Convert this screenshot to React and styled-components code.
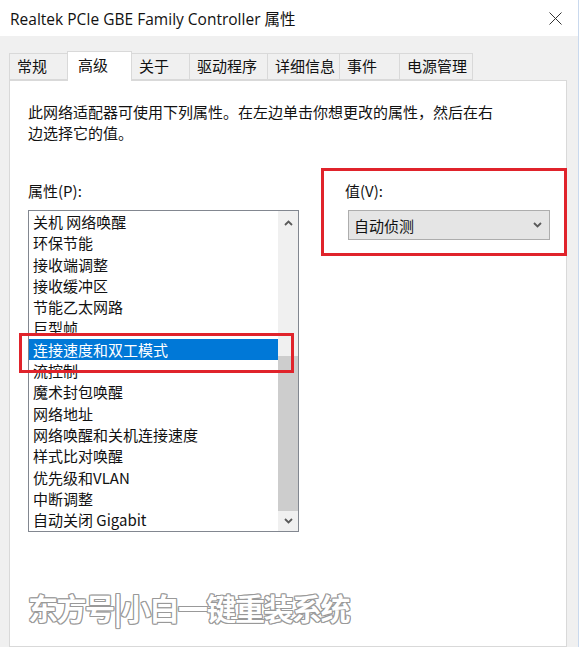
import React from "react";
import styled, { createGlobalStyle } from "styled-components";

const Global = createGlobalStyle`
  html, body { margin: 0; padding: 0; background: #f0f0f0; }
  body { font-family: "Noto Sans CJK SC", "Noto Sans", sans-serif; color: #000; }
  * { box-sizing: border-box; }
`;

const Window = styled.div`
  width: 579px;
  height: 647px;
  overflow: hidden;
  display: flex;
  flex-direction: column;
  background: #f0f0f0;
  border-right: 1px solid #c9d9ee;
`;

const TitleBar = styled.div`
  height: 36px;
  flex: none;
  background: #fff;
  display: flex;
  align-items: center;
  justify-content: space-between;
  padding: 0 16px 0 10px;
`;

const Title = styled.div`
  font-family: "Open Sans", "Noto Sans CJK SC", sans-serif;
  font-size: 15.5px;
  color: #111;
  white-space: nowrap;
`;

const TabsRow = styled.div`
  height: 44px;
  flex: none;
  display: flex;
  align-items: flex-end;
  padding-left: 10px;
  position: relative;
  z-index: 1;
`;

const Tab = styled.div`
  width: ${(p) => p.$w}px;
  height: ${(p) => (p.$active ? 30 : 27)}px;
  margin-bottom: ${(p) => (p.$active ? -1 : 0)}px;
  padding-left: ${(p) => (p.$active ? 10 : 7)}px;
  border: 1px solid #d9d9d9;
  border-bottom: ${(p) => (p.$active ? "none" : "1px solid #d9d9d9")};
  margin-left: -1px;
  background: ${(p) => (p.$active ? "#fff" : "#f0f0f0")};
  font-size: 15px;
  line-height: ${(p) => (p.$active ? 26 : 23)}px;
  color: #111;
  white-space: nowrap;
`;

const Panel = styled.div`
  flex: 1;
  margin-left: 9px;
  width: 558px;
  background: #fff;
  border: 1px solid #d9d9d9;
  padding: 20px 0 0 18px;
  display: flex;
  flex-direction: column;
`;

const Description = styled.p`
  margin: 0;
  width: 472px;
  font-size: 15px;
  line-height: 21px;
  color: #111;
`;

const Columns = styled.div`
  margin-top: 25px;
  display: grid;
  grid-template-columns: 271px 246px;
  column-gap: 22px;
  align-items: start;
`;

const LeftColumn = styled.div`
  padding-top: 12px;
  position: relative;
`;

const FieldLabel = styled.div`
  font-size: 15px;
  line-height: 21px;
  color: #111;
  margin-bottom: 9px;
`;

const ListBox = styled.div`
  position: relative;
  height: 322px;
  border: 1px solid #828790;
  display: flex;
`;

const Items = styled.div`
  flex: 1;
  padding-top: 0;
`;

const Item = styled.div`
  height: 21.3px;
  line-height: 21.3px;
  padding-left: 4px;
  font-size: 15px;
  white-space: nowrap;
  color: ${(p) => (p.$selected ? "#fff" : "#111")};
  background: ${(p) => (p.$selected ? "#0078d7" : "transparent")};
`;

const Scrollbar = styled.div`
  width: 20px;
  background: #f0f0f0;
  display: flex;
  flex-direction: column;
`;

const ScrollButton = styled.div`
  height: ${(p) => p.$h}px;
  display: flex;
  align-items: center;
  justify-content: center;
  flex: none;
`;

const Track = styled.div`
  flex: 1;
  display: flex;
  flex-direction: column;
  justify-content: flex-end;
`;

const Thumb = styled.div`
  height: 155px;
  background: #cdcdcd;
`;

const Annotation = styled.div`
  position: absolute;
  left: ${(p) => p.$x}px;
  top: ${(p) => p.$y}px;
  width: ${(p) => p.$w}px;
  height: ${(p) => p.$h}px;
  border: 3px solid #e0232b;
  pointer-events: none;
`;

const ValueBox = styled.div`
  border: 3px solid #e0232b;
  padding: 9px 0 13px 21px;
`;

const Select = styled.div`
  margin-left: 3px;
  width: 202px;
  height: 30px;
  background: #e5e5e5;
  border: 1px solid #adadad;
  display: flex;
  align-items: center;
  justify-content: space-between;
  padding: 0 7px 0 5px;
  font-size: 15px;
  color: #111;
`;

const Watermark = styled.div`
  margin-top: 57px;
  font-size: 30px;
  line-height: 36px;
  font-weight: 700;
  letter-spacing: -1.5px;
  color: #fff;
  white-space: nowrap;
  text-shadow:
    1px 0 0 #999, -1px 0 0 #999, 0 1px 0 #999, 0 -1px 0 #999,
    1px 1px 0 #999, -1px -1px 0 #999, 1px -1px 0 #999, -1px 1px 0 #999;
`;

const Chevron = ({ up }) => (
  <svg width="9" height="6" viewBox="0 0 9 6">
    <path
      d={up ? "M1 5 L4.5 1.5 L8 5" : "M1 1 L4.5 4.5 L8 1"}
      fill="none"
      stroke="#5a5a5a"
      strokeWidth="1.8"
    />
  </svg>
);

const tabs = [
  { label: "常规", w: 59 },
  { label: "高级", w: 65, active: true },
  { label: "关于", w: 59 },
  { label: "驱动程序", w: 79 },
  { label: "详细信息", w: 73 },
  { label: "事件", w: 61 },
  { label: "电源管理", w: 74 },
];

const items = [
  "关机 网络唤醒",
  "环保节能",
  "接收端调整",
  "接收缓冲区",
  "节能乙太网路",
  "巨型帧",
  "连接速度和双工模式",
  "流控制",
  "魔术封包唤醒",
  "网络地址",
  "网络唤醒和关机连接速度",
  "样式比对唤醒",
  "优先级和VLAN",
  "中断调整",
  "自动关闭 Gigabit",
];

export default function App() {
  return (
    <>
      <Global />
      <Window>
        <TitleBar>
          <Title>Realtek PCIe GBE Family Controller 属性</Title>
          <svg width="13" height="13" viewBox="0 0 13 13">
            <path d="M0.5 0.5 L12.5 12.5 M12.5 0.5 L0.5 12.5" stroke="#333" strokeWidth="1" />
          </svg>
        </TitleBar>
        <TabsRow>
          {tabs.map((t) => (
            <Tab key={t.label} $w={t.w} $active={t.active}>
              {t.label}
            </Tab>
          ))}
        </TabsRow>
        <Panel>
          <Description>
            此网络适配器可使用下列属性。在左边单击你想更改的属性，然后在右边选择它的值。
          </Description>
          <Columns>
            <LeftColumn>
              <FieldLabel>属性(P):</FieldLabel>
              <ListBox>
                <Items>
                  {items.map((it, i) => (
                    <Item key={it} $selected={i === 6}>
                      {it}
                    </Item>
                  ))}
                </Items>
                <Scrollbar>
                  <ScrollButton $h={24}>
                    <Chevron up />
                  </ScrollButton>
                  <Track>
                    <Thumb />
                  </Track>
                  <ScrollButton $h={20}>
                    <Chevron />
                  </ScrollButton>
                </Scrollbar>
              </ListBox>
              <Annotation $x={-9} $y={165} $w={275} $h={40} />
            </LeftColumn>
            <ValueBox>
              <FieldLabel>值(V):</FieldLabel>
              <Select>
                <span>自动侦测</span>
                <Chevron />
              </Select>
            </ValueBox>
          </Columns>
          <Watermark>东方号|小白一键重装系统</Watermark>
        </Panel>
      </Window>
    </>
  );
}
